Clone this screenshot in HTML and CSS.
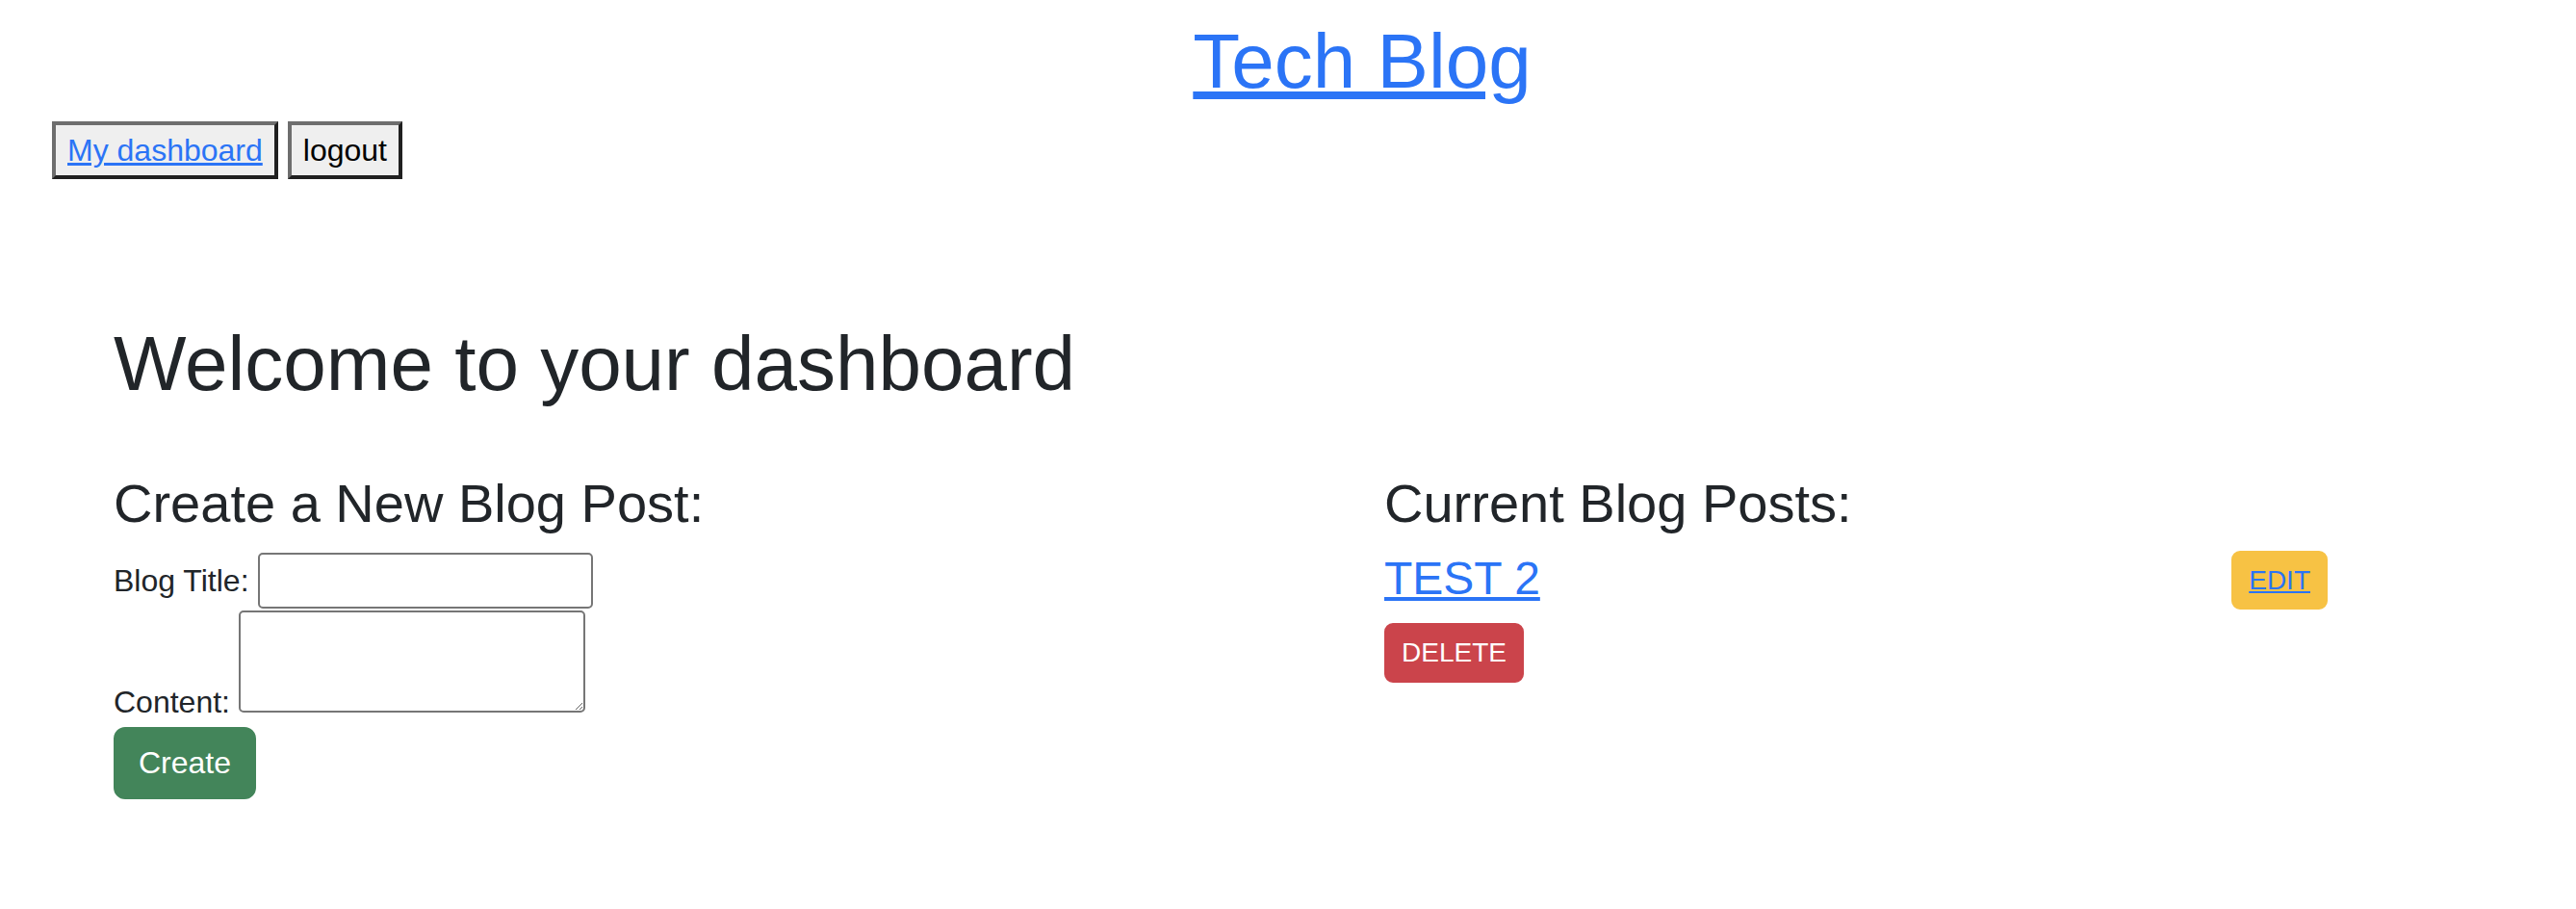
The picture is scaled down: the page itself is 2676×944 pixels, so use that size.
FILE: index.html
```html
<!DOCTYPE html>
<html lang="en">
<head>
<meta charset="utf-8">
<title>Tech Blog</title>
<link rel="stylesheet" href="styles.css">
</head>
<body>
<header class="site-header">
  <h1 class="site-title"><a href="#">Tech Blog</a></h1>
  <nav class="nav">
    <button class="nav-btn" type="button"><a href="#">My dashboard</a></button>
    <button class="nav-btn" type="button">logout</button>
  </nav>
</header>
<main class="dashboard">
  <h1 class="welcome">Welcome to your dashboard</h1>
  <div class="columns">
    <section class="col-create">
      <h3 class="section-title">Create a New Blog Post:</h3>
      <form class="post-form">
        <div class="field-row">
          <label class="field-label" for="title">Blog Title:</label>
          <input class="title-input" id="title" type="text">
        </div>
        <div class="field-row-area"><label class="field-label" for="content">Content:</label> <textarea class="content-input" id="content"></textarea></div>
        <button class="btn btn-create" type="submit">Create</button>
      </form>
    </section>
    <section class="col-posts">
      <h3 class="section-title">Current Blog Posts:</h3>
      <div class="post-row">
        <h4 class="post-title"><a href="#">TEST 2</a></h4>
        <button class="btn btn-sm btn-edit" type="button"><a href="#">EDIT</a></button>
      </div>
      <button class="btn btn-sm btn-delete" type="button">DELETE</button>
    </section>
  </div>
</main>
</body>
</html>
```
FILE: styles.css
```css
* { box-sizing: border-box; }
body {
  margin: 0;
  font-family: "Liberation Sans", Arial, Helvetica, sans-serif;
  font-size: 32px;
  line-height: 48px;
  color: #212529;
  background: #ffffff;
}
a { color: #2b74f6; text-decoration: underline; }

.site-header { padding: 16px 0 0 54px; }
.site-title {
  margin: 0;
  padding-left: 100px;
  text-align: center;
  font-size: 80px;
  line-height: 96px;
  font-weight: 400;
}
.nav {
  margin-top: 14px;
  display: flex;
  gap: 10px;
  align-items: flex-start;
}
.nav-btn {
  font-family: inherit;
  font-size: 32px;
  line-height: 48px;
  padding: 2px 12px;
  border: 4px solid;
  border-color: #6e6e6e #202020 #202020 #6e6e6e;
  border-radius: 0;
  background: #efefef;
  color: #000000;
  margin: 0;
}

.dashboard { padding-left: 118px; }
.welcome {
  margin: 144px 0 0;
  font-size: 80px;
  line-height: 96px;
  font-weight: 400;
}
.columns {
  display: flex;
  margin-top: 63px;
}
.col-create { width: 1320px; }
.col-posts { width: 980px; }
.section-title {
  margin: 0 0 16px;
  font-size: 56px;
  line-height: 67.2px;
  font-weight: 400;
}
.post-form { margin: 0; padding-top: 2px; }
.field-row {
  display: flex;
  align-items: baseline;
  gap: 9px;
}
.field-label { font-size: 32px; }
.title-input {
  width: 348px;
  height: 58px;
  border: 2px solid #767676;
  border-radius: 5px;
  padding: 0 4px;
  font-family: inherit;
  font-size: 32px;
  margin: 0;
  background: #fff;
}
.field-row-area { margin-top: 2px; }
.content-input {
  width: 360px;
  height: 106px;
  border: 2px solid #767676;
  border-radius: 5px;
  padding: 4px;
  font-family: inherit;
  font-size: 32px;
  margin: 0;
  vertical-align: baseline;
  background: #fff;
}

.btn {
  display: inline-block;
  font-family: inherit;
  color: #ffffff;
  border: 2px solid transparent;
  margin: 0;
}
.btn-create {
  margin-top: 2px;
  font-size: 32px;
  line-height: 47px;
  padding: 12px 24px;
  border-radius: 12px;
  background: #43855a;
  border-color: #43855a;
  display: block;
}
.btn-sm {
  font-size: 28px;
  line-height: 41px;
  padding: 8px 16px;
  border-radius: 9px;
}
.btn-edit { background: #f7c244; border-color: #f7c244; }
.btn-delete { background: #cb444b; border-color: #cb444b; line-height: 42px; margin-top: 1px; }

.post-row {
  display: flex;
  justify-content: space-between;
  align-items: flex-start;
}
.post-title {
  margin: 0 0 16px;
  font-size: 48px;
  line-height: 57.6px;
  font-weight: 400;
}
```
